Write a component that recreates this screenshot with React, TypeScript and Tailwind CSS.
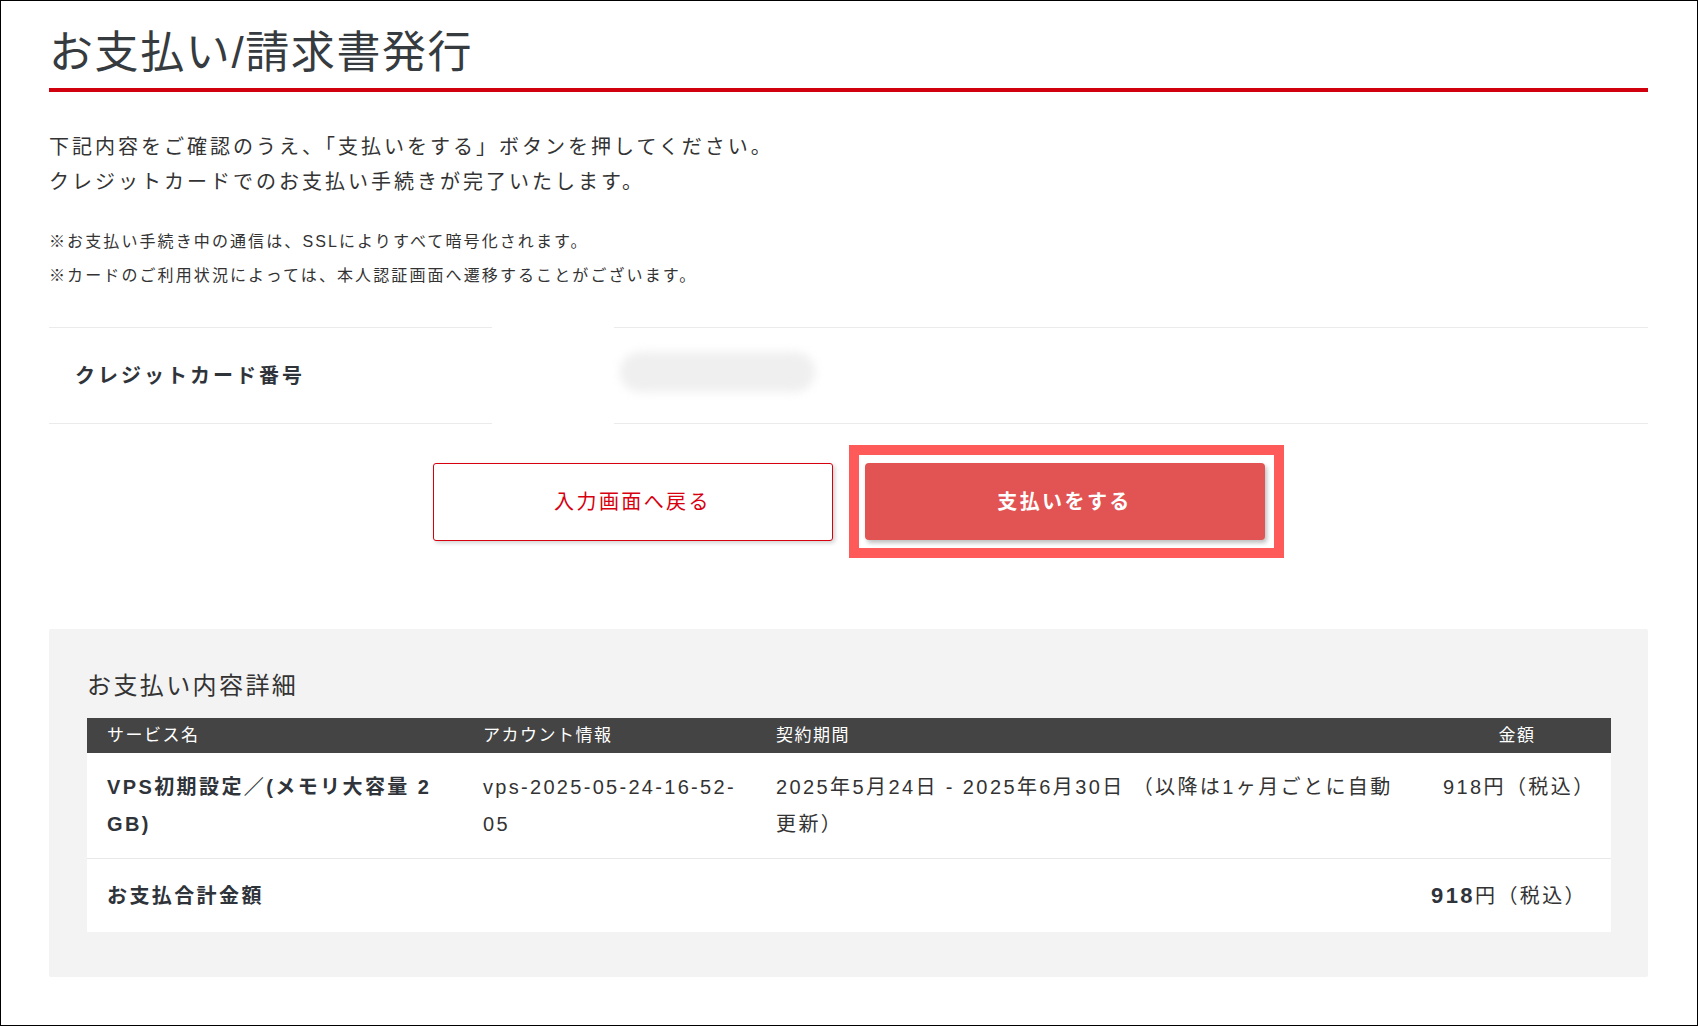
export default function App() {
  const cols = "grid grid-cols-[376px_293px_687px_168px]";
  return (
    <div className="w-[1698px] h-[1026px] border border-black bg-white text-[#333] overflow-hidden font-['Liberation_Sans','Noto_Sans_CJK_JP',sans-serif]">
      <div className="pl-[48px] pr-[49px] pt-[27px]">
        <h1 className="text-[44px] leading-[50px] tracking-[1.6px] text-[#363b40] pb-[10px] border-b-4 border-[#d1000f] font-normal">
          お支払い/請求書発行
        </h1>

        <div className="mt-[38px] text-[20px] leading-[35px] tracking-[3px]">
          <p>下記内容をご確認のうえ、「支払いをする」ボタンを押してください。</p>
          <p>クレジットカードでのお支払い手続きが完了いたします。</p>
        </div>

        <div className="mt-[25px] text-[16px] leading-[34px] tracking-[2.1px]">
          <p>※お支払い手続き中の通信は、SSLによりすべて暗号化されます。</p>
          <p>※カードのご利用状況によっては、本人認証画面へ遷移することがございます。</p>
        </div>

        <div className="mt-[34px] flex h-[97px]">
          <div className="w-[443px] flex items-center pl-[26px] border-y border-[#ebebeb] text-[20px] font-bold tracking-[3px] text-[#2f343a]">
            クレジットカード番号
          </div>
          <div className="w-[122px]" />
          <div className="flex-1 flex items-center border-y border-[#ebebeb] pl-[6px]">
            <div className="-mt-[8px] w-[195px] h-[40px] rounded-full bg-[#efefef] blur-[5px]" />
          </div>
        </div>

        <div className="mt-[39px] flex justify-center items-start gap-[32px]">
          <button className="w-[400px] h-[78px] border border-[#d7000f] rounded-[3px] bg-white text-[#d7000f] text-[20px] tracking-[2.4px] shadow-[2px_2px_4px_rgba(0,0,0,0.18)] flex items-center justify-center">
            入力画面へ戻る
          </button>
          <div className="relative">
            <button className="w-[400px] h-[77px] rounded-[4px] bg-[#e25353] text-white font-bold text-[20px] tracking-[2.4px] shadow-[2px_3px_4px_rgba(0,0,0,0.25)] flex items-center justify-center">
              支払いをする
            </button>
            <div className="absolute -left-[16px] -right-[19px] -top-[18px] -bottom-[18px] border-[10px] border-[#ff5a5a] pointer-events-none" />
          </div>
        </div>

        <div className="mt-[88px] bg-[#f3f3f3] rounded-[2px] pl-[38px] pr-[37px] pt-[41px] pb-[45px]">
          <h2 className="text-[24px] leading-[32px] tracking-[2.4px] text-[#333] font-normal">
            お支払い内容詳細
          </h2>
          <div className="mt-[16px] bg-white">
            <div className={`${cols} h-[35px] bg-[#444] text-white text-[17px] tracking-[1.5px] items-center`}>
              <div className="pl-[20px]">サービス名</div>
              <div className="pl-[20px]">アカウント情報</div>
              <div className="pl-[20px]">契約期間</div>
              <div className="text-center pr-[20px]">金額</div>
            </div>
            <div className={`${cols} py-[15.5px] leading-[37px] text-[20px] tracking-[2.4px] border-b border-[#e8e8e8]`}>
              <div className="pl-[20px] font-bold text-[#2f343a]">
                VPS初期設定／(メモリ大容量 2
                <br />
                GB)
              </div>
              <div className="pl-[20px] tracking-[2.3px]">
                vps-2025-05-24-16-52-
                <br />
                05
              </div>
              <div className="pl-[20px] whitespace-nowrap">
                2025年5月24日 - 2025年6月30日 （以降は1ヶ月ごとに自動
                <br />
                更新）
              </div>
              <div className="text-center pr-[20px] whitespace-nowrap">918円（税込）</div>
            </div>
            <div className="flex items-center justify-between h-[73px] pl-[20px] pr-[24px] text-[20px] tracking-[2.4px]">
              <div className="font-bold text-[#2f343a]">お支払合計金額</div>
              <div className="whitespace-nowrap">
                <span className="font-bold text-[#2f343a] text-[22px]">918</span>円（税込）
              </div>
            </div>
          </div>
        </div>
      </div>
    </div>
  );
}
